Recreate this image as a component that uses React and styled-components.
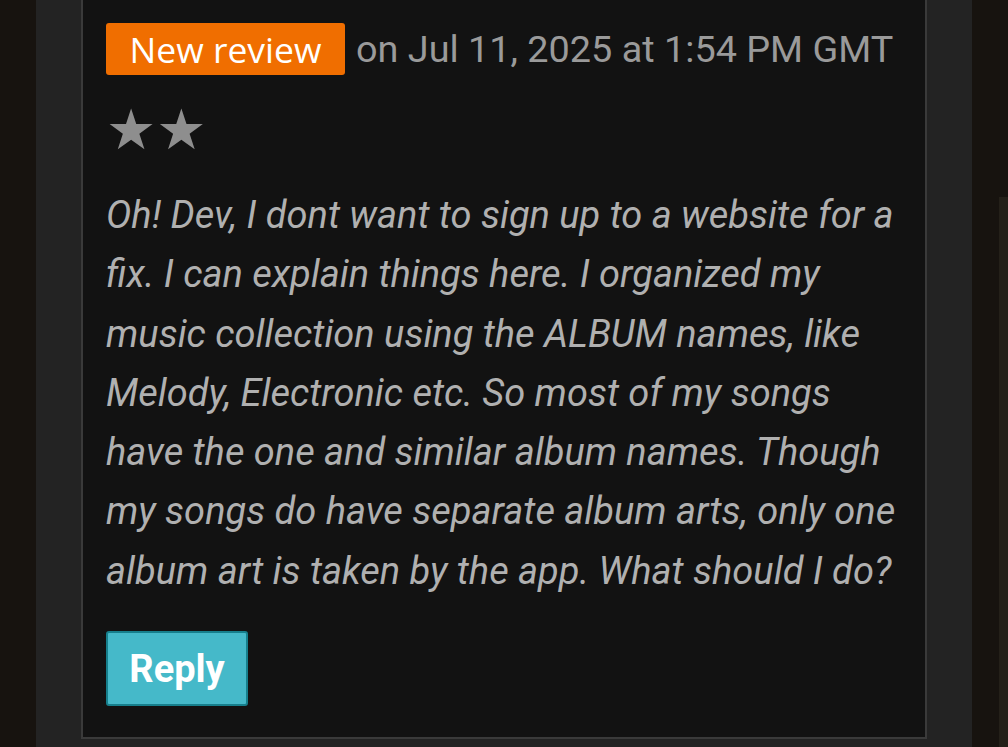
import React from "react";
import styled, { createGlobalStyle } from "styled-components";

const GlobalStyle = createGlobalStyle`
  html, body {
    margin: 0;
    padding: 0;
    background: #17130f;
  }
  body {
    font-family: Roboto, "Liberation Sans", sans-serif;
  }
`;

const Page = styled.div`
  display: flex;
  height: 747px;
  overflow: hidden;
`;

const Panel = styled.div`
  margin-left: 36px;
  width: 936px;
  background: #232323;
  padding: 0 45px;
  box-sizing: border-box;
`;

const Side = styled.div`
  flex: 1;
  display: flex;
  justify-content: flex-end;
  padding-top: 197px;
`;

const SideStrip = styled.div`
  width: 9px;
  background: #242019;
`;

const Card = styled.div`
  background: #121212;
  border: 2px solid #3a3a3a;
  border-top: none;
  padding: 23px 21px 31px 23px;
`;

const Header = styled.div`
  display: flex;
  align-items: center;
  gap: 11px;
`;

const Badge = styled.span`
  display: inline-flex;
  align-items: center;
  justify-content: center;
  width: 239px;
  height: 52px;
  background: #f06e00;
  border-radius: 3px;
  color: #fff;
  font-family: "Open Sans", "Noto Sans", sans-serif;
  font-size: 35.5px;
`;

const DateText = styled.span`
  color: #9a9a9a;
  font-size: 37.8px;
`;

const Stars = styled.div`
  margin-top: 27px;
  color: #8e8e8e;
  font-family: "DejaVu Sans", sans-serif;
  font-size: 56px;
  line-height: 1;
`;

const Body = styled.p`
  margin: 28px 0 0;
  color: #b0b0b0;
  font-style: italic;
  font-size: 38px;
  line-height: 59.3px;
`;

const ReplyButton = styled.button`
  margin-top: 30px;
  width: 142px;
  height: 75px;
  background: #45b9c9;
  border: 2px solid #167f8c;
  border-radius: 3px;
  color: #fff;
  font-family: Roboto, sans-serif;
  font-weight: 700;
  font-size: 38px;
  padding: 0;
`;

export default function App() {
  return (
    <>
      <GlobalStyle />
      <Page>
        <Panel>
          <Card>
            <Header>
              <Badge>New review</Badge>
              <DateText>on Jul 11, 2025 at 1:54 PM GMT</DateText>
            </Header>
            <Stars>★★</Stars>
            <Body>
              Oh! Dev, I dont want to sign up to a website for a fix. I can
              explain things here. I organized my music collection using the
              ALBUM names, like Melody, Electronic etc. So most of my songs have
              the one and similar album names. Though my songs do have separate
              album arts, only one album art is taken by the app. What should I
              do?
            </Body>
            <ReplyButton>Reply</ReplyButton>
          </Card>
        </Panel>
        <Side>
          <SideStrip />
        </Side>
      </Page>
    </>
  );
}
